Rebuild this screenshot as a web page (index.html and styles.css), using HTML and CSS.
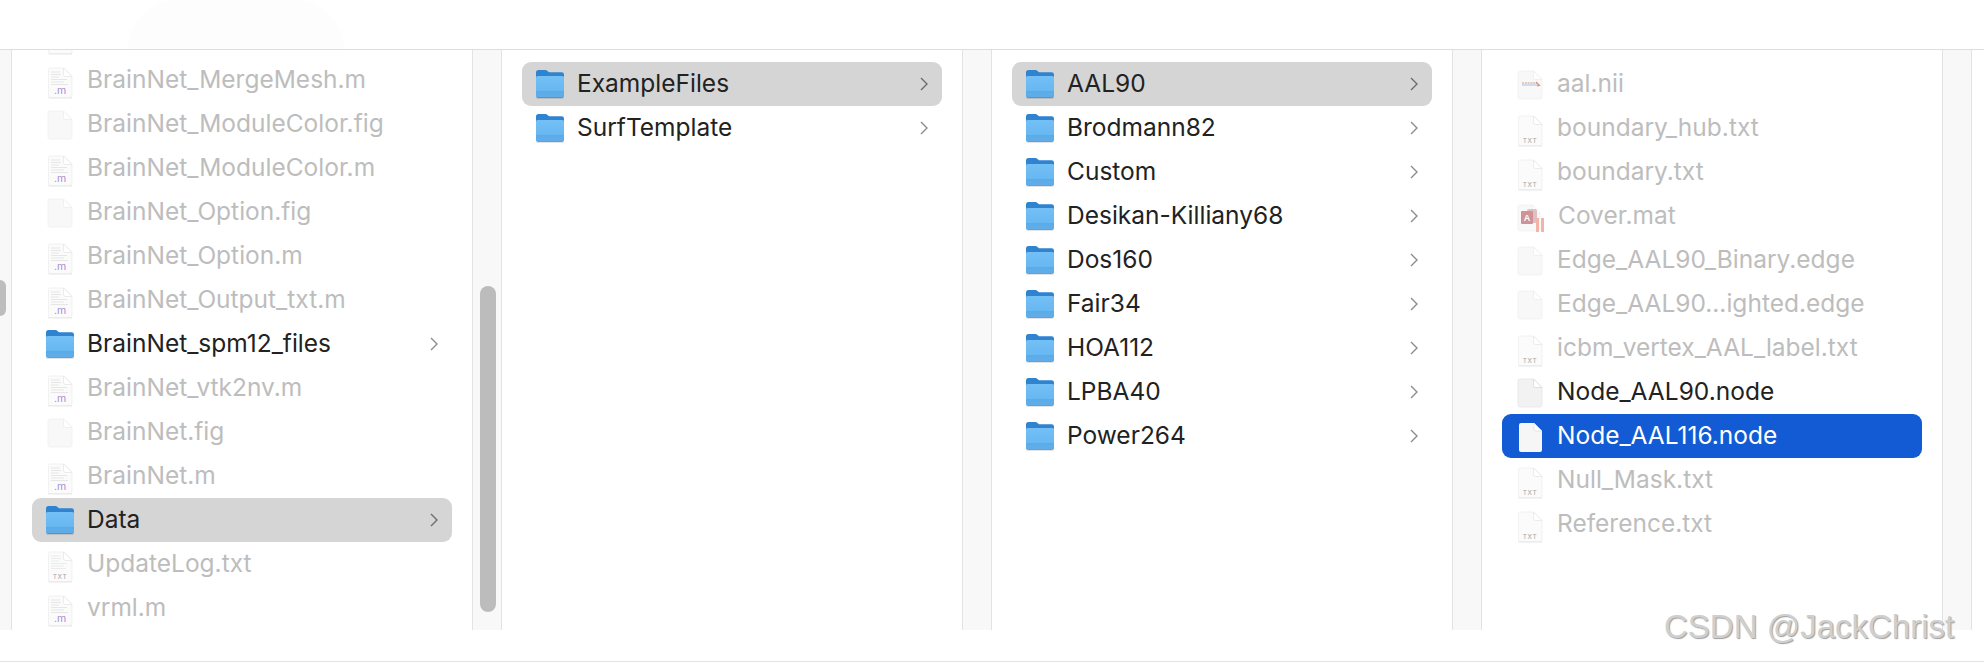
FILE: index.html
```html
<!DOCTYPE html>
<html lang="en">
<head>
<meta charset="utf-8">
<title>Finder columns</title>
<link rel="stylesheet" href="styles.css">
</head>
<body>
<svg class="defs" width="0" height="0" aria-hidden="true">
  <defs>
    <linearGradient id="fb" x1="0" y1="0" x2="0" y2="1"><stop offset="0" stop-color="#74c0f6"/><stop offset="1" stop-color="#62b3ef"/></linearGradient>
    <symbol id="folder" viewBox="0 0 28 30">
      <path d="M0 3.5Q0 1 2.5 1H9.5Q10.500 1 11.500 2L13 3.200H25.500Q28 3.200 28 5.500V26Q28 28.200 25.800 28.200H2.200Q0 28.200 0 26Z" fill="#2f83cf"/>
      <rect x="0" y="7" width="28" height="21.200" rx="1.500" fill="url(#fb)"/>
      <rect x="0" y="22.500" width="28" height="1" fill="#4f9edb"/>
      <rect x="0" y="23.500" width="28" height="4.700" rx="1.500" fill="#5eadea"/>
      <rect x="0.500" y="28.200" width="27" height="1.200" fill="#000" opacity=".28"/>
    </symbol>
    <symbol id="chev" viewBox="0 0 8 14">
      <path d="M1 1L7 7L1 13" fill="none" stroke="currentColor" stroke-width="1.400"/>
    </symbol>
    <symbol id="blank" viewBox="0 0 26 30">
      <path d="M1 3Q1 1 3 1H16.500L25 9.500V27Q25 29 23 29H3Q1 29 1 27Z" fill="#f8f8f8" stroke="#f0f0f0" stroke-width=".8"/>
      <path d="M16.500 1V7.500Q16.500 9.500 18.500 9.500H25Z" fill="#fff" stroke="#ececec" stroke-width=".8"/>
    </symbol>
    <symbol id="blank-on" viewBox="0 0 26 30">
      <path d="M1 3Q1 1 3 1H16.500L25 9.500V27Q25 29 23 29H3Q1 29 1 27Z" fill="#f2f2f2" stroke="#e6e6e6" stroke-width=".8"/>
      <path d="M16.500 1V7.500Q16.500 9.500 18.500 9.500H25Z" fill="#fff" stroke="#d8d8d8" stroke-width=".8"/>
    </symbol>
    <symbol id="blank-sel" viewBox="0 0 26 30">
      <path d="M2 3Q2 1 4 1H17L25 9V28Q25 30 23 30H4Q2 30 2 28Z" fill="#f6f6f6"/>
      <path d="M17 1V7Q17 9 19 9H25Z" fill="#fff" stroke="#cfd8e8" stroke-width=".6"/>
    </symbol>
    <symbol id="doc" viewBox="0 0 26 32">
      <path d="M1.500 2.500Q1.500 1 3 1H16.500L25 9.500V29Q25 30.500 23.500 30.500H3Q1.500 30.500 1.500 29Z" fill="#fbfbfb"/>
      <path d="M1.500 30.500H25V31.300H1.500Z" fill="#d6d6d6"/>
      <path d="M1.500 2.500Q1.500 1 3 1H16.500L25 9.500V29Q25 30.500 23.500 30.500H3Q1.500 30.500 1.500 29Z" fill="none" stroke="#ececec" stroke-width=".7"/>
      <path d="M16.500 1V7.500Q16.500 9.500 18.500 9.500H25Z" fill="#fff" stroke="#e4e4e4" stroke-width=".7"/>
    </symbol>
    <symbol id="doc-m" viewBox="0 0 26 32">
      <use href="#doc"/>
      <path d="M4 5H13M4 7.500H14M4 10H12M4 12.500H20M4 15H17M4 17.500H21" stroke="#e6e6e6" stroke-width="1.200"/>
      <text class="glyph-m" x="13" y="27" text-anchor="middle">.m</text>
    </symbol>
    <symbol id="doc-txt" viewBox="0 0 26 32">
      <use href="#doc"/>
      <text class="glyph-txt" x="13" y="27.500" text-anchor="middle">TXT</text>
    </symbol>
    <symbol id="doc-lines" viewBox="0 0 26 32">
      <use href="#doc"/>
      <path d="M4 5H13M4 7.500H14M4 10H12M4 12.500H20M4 15H17M4 17.500H19" stroke="#ececec" stroke-width="1.200"/>
      <text class="glyph-txt" x="13" y="27.500" text-anchor="middle">TXT</text>
    </symbol>
    <symbol id="doc-nii" viewBox="0 0 26 30">
      <use href="#blank"/>
      <path d="M5 13H20" stroke="#dcb6b0" stroke-width="1.500" stroke-dasharray="2 .8"/>
      <path d="M5 15H21" stroke="#cfdcec" stroke-width="2"/>
      <path d="M19 12L22.500 15.500L20 16" fill="none" stroke="#d98f84" stroke-width="1.200"/>
    </symbol>
    <symbol id="doc-mat" viewBox="0 0 28 30">
      <use href="#blank" width="24" height="30"/>
      <rect x="10" y="6" width="10" height="14" rx="2" fill="#dcc0c3"/>
      <rect x="4" y="8" width="12" height="13" rx="1" fill="#cf9297"/>
      <text class="glyph-a" x="10" y="18" text-anchor="middle">A</text>
      <rect x="19" y="15" width="3" height="14" fill="#f3b3a9"/>
      <rect x="24" y="15" width="3" height="14" fill="#f3b3a9"/>
    </symbol>
  </defs>
</svg>

<header class="toolbar"><div class="ghost"></div></header>

<main class="browser">
  <div class="rail-thumb"></div>

  <section class="col">
    <div class="list list-scrolled">
      <div class="row"><svg class="ic ic-doc"><use href="#doc-m"/></svg></div>
      <div class="row dim"><svg class="ic ic-doc"><use href="#doc-m"/></svg><span class="name">BrainNet_MergeMesh.m</span></div>
      <div class="row dim"><svg class="ic ic-blank"><use href="#blank"/></svg><span class="name">BrainNet_ModuleColor.fig</span></div>
      <div class="row dim"><svg class="ic ic-doc"><use href="#doc-m"/></svg><span class="name">BrainNet_ModuleColor.m</span></div>
      <div class="row dim"><svg class="ic ic-blank"><use href="#blank"/></svg><span class="name">BrainNet_Option.fig</span></div>
      <div class="row dim"><svg class="ic ic-doc"><use href="#doc-m"/></svg><span class="name">BrainNet_Option.m</span></div>
      <div class="row dim"><svg class="ic ic-doc"><use href="#doc-m"/></svg><span class="name">BrainNet_Output_txt.m</span></div>
      <div class="row"><svg class="ic ic-folder"><use href="#folder"/></svg><span class="name">BrainNet_spm12_files</span><svg class="chev"><use href="#chev"/></svg></div>
      <div class="row dim"><svg class="ic ic-doc"><use href="#doc-m"/></svg><span class="name">BrainNet_vtk2nv.m</span></div>
      <div class="row dim"><svg class="ic ic-blank"><use href="#blank"/></svg><span class="name">BrainNet.fig</span></div>
      <div class="row dim"><svg class="ic ic-doc"><use href="#doc-m"/></svg><span class="name">BrainNet.m</span></div>
      <div class="row open"><svg class="ic ic-folder"><use href="#folder"/></svg><span class="name">Data</span><svg class="chev"><use href="#chev"/></svg></div>
      <div class="row dim"><svg class="ic ic-doc"><use href="#doc-lines"/></svg><span class="name">UpdateLog.txt</span></div>
      <div class="row dim"><svg class="ic ic-doc"><use href="#doc-m"/></svg><span class="name">vrml.m</span></div>
    </div>
    <div class="thumb"></div>
  </section>

  <section class="col">
    <div class="list">
      <div class="row open"><svg class="ic ic-folder"><use href="#folder"/></svg><span class="name">ExampleFiles</span><svg class="chev"><use href="#chev"/></svg></div>
      <div class="row"><svg class="ic ic-folder"><use href="#folder"/></svg><span class="name">SurfTemplate</span><svg class="chev"><use href="#chev"/></svg></div>
    </div>
  </section>

  <section class="col">
    <div class="list">
      <div class="row open"><svg class="ic ic-folder"><use href="#folder"/></svg><span class="name">AAL90</span><svg class="chev"><use href="#chev"/></svg></div>
      <div class="row"><svg class="ic ic-folder"><use href="#folder"/></svg><span class="name">Brodmann82</span><svg class="chev"><use href="#chev"/></svg></div>
      <div class="row"><svg class="ic ic-folder"><use href="#folder"/></svg><span class="name">Custom</span><svg class="chev"><use href="#chev"/></svg></div>
      <div class="row"><svg class="ic ic-folder"><use href="#folder"/></svg><span class="name">Desikan-Killiany68</span><svg class="chev"><use href="#chev"/></svg></div>
      <div class="row"><svg class="ic ic-folder"><use href="#folder"/></svg><span class="name">Dos160</span><svg class="chev"><use href="#chev"/></svg></div>
      <div class="row"><svg class="ic ic-folder"><use href="#folder"/></svg><span class="name">Fair34</span><svg class="chev"><use href="#chev"/></svg></div>
      <div class="row"><svg class="ic ic-folder"><use href="#folder"/></svg><span class="name">HOA112</span><svg class="chev"><use href="#chev"/></svg></div>
      <div class="row"><svg class="ic ic-folder"><use href="#folder"/></svg><span class="name">LPBA40</span><svg class="chev"><use href="#chev"/></svg></div>
      <div class="row"><svg class="ic ic-folder"><use href="#folder"/></svg><span class="name">Power264</span><svg class="chev"><use href="#chev"/></svg></div>
    </div>
  </section>

  <section class="col">
    <div class="list">
      <div class="row dim"><svg class="ic ic-blank"><use href="#doc-nii"/></svg><span class="name">aal.nii</span></div>
      <div class="row dim"><svg class="ic ic-doc"><use href="#doc-txt"/></svg><span class="name">boundary_hub.txt</span></div>
      <div class="row dim"><svg class="ic ic-doc"><use href="#doc-txt"/></svg><span class="name">boundary.txt</span></div>
      <div class="row dim"><svg class="ic ic-mat"><use href="#doc-mat"/></svg><span class="name">Cover.mat</span></div>
      <div class="row dim"><svg class="ic ic-blank"><use href="#blank"/></svg><span class="name">Edge_AAL90_Binary.edge</span></div>
      <div class="row dim"><svg class="ic ic-blank"><use href="#blank"/></svg><span class="name">Edge_AAL90...ighted.edge</span></div>
      <div class="row dim"><svg class="ic ic-doc"><use href="#doc-txt"/></svg><span class="name">icbm_vertex_AAL_label.txt</span></div>
      <div class="row"><svg class="ic ic-blank"><use href="#blank-on"/></svg><span class="name">Node_AAL90.node</span></div>
      <div class="row selected"><svg class="ic ic-blank"><use href="#blank-sel"/></svg><span class="name">Node_AAL116.node</span></div>
      <div class="row dim"><svg class="ic ic-doc"><use href="#doc-txt"/></svg><span class="name">Null_Mask.txt</span></div>
      <div class="row dim"><svg class="ic ic-doc"><use href="#doc-txt"/></svg><span class="name">Reference.txt</span></div>
    </div>
  </section>

  <div class="tail"></div>
</main>

<footer class="statusbar"><div class="rule"></div></footer>
<div class="watermark">CSDN @JackChrist</div>
</body>
</html>
```

FILE: styles.css
```css
* { box-sizing: border-box; }

html, body {
  margin: 0;
  width: 1984px;
  height: 662px;
  overflow: hidden;
  background: #fff;
  font-family: Inter, "Liberation Sans", sans-serif;
}

body {
  display: flex;
  flex-direction: column;
  position: relative;
}

.defs { position: absolute; }

.toolbar {
  position: relative;
  z-index: 2;
  flex: 0 0 50px;
  background: #fff;
  border-bottom: 1px solid #dedede;
  overflow: hidden;
}

.ghost {
  position: absolute;
  left: 128px;
  top: 0;
  width: 216px;
  height: 60px;
  background: #fdfdfd;
  border-radius: 50px 50px 0 0;
}

.browser {
  position: relative;
  flex: 0 0 568px;
  display: flex;
  gap: 28px;
  padding-left: 11px;
  background: #f8f8f8;
}

.rail-thumb {
  position: absolute;
  left: 0;
  top: 230px;
  width: 6px;
  height: 36px;
  background: #bdbdbd;
  border-radius: 0 6px 6px 0;
}

.col {
  position: relative;
  flex: 0 0 462px;
  background: #fff;
  border-left: 1px solid #e3e3e3;
  border-right: 1px solid #e3e3e3;
}

.list {
  padding: 12px 20px 0;
}

.list-scrolled {
  margin-top: -48px;
}

.thumb {
  position: absolute;
  right: -24px;
  top: 236px;
  width: 16px;
  height: 326px;
  background: #bcbcbc;
  border-radius: 8px;
}

.tail {
  flex: 1;
  margin-left: 0;
  background: #fff;
  border-left: 1px solid #e3e3e3;
}

.row {
  display: flex;
  align-items: center;
  height: 44px;
  padding: 0 14px;
  border-radius: 9px;
  color: #222;
  font-size: 24.500px;
  line-height: 44px;
  white-space: nowrap;
}

.row.open { background: #d5d5d5; }
.row.selected { background: #125bd4; color: #fff; }
.row.dim { color: #bdbdbd; }

.name {
  flex: 1;
  position: relative;
  top: -1px;
}

.ic {
  flex: 0 0 auto;
  margin-right: 13px;
  overflow: visible;
}

.ic-folder { width: 28px; height: 30px; }
.ic-doc { width: 26px; height: 32px; margin-left: 1px; margin-right: 14px; position: relative; top: 3px; }
.ic-blank { width: 26px; height: 30px; margin-left: 1px; margin-right: 14px; position: relative; top: 1px; }
.ic-mat { width: 28px; height: 30px; margin-left: 1px; margin-right: 13px; position: relative; top: 2px; }

.chev {
  flex: 0 0 auto;
  width: 8px;
  height: 14px;
  color: #8c8c8c;
}

.row.open .chev { color: #6c6c6c; }

.glyph-m {
  font: 400 10.500px Inter, "Liberation Sans", sans-serif;
  fill: #a98ed0;
}

.glyph-txt {
  font: 400 6.500px Inter, "Liberation Sans", sans-serif;
  letter-spacing: .6px;
  fill: #a4a4a4;
}

.glyph-a {
  font: 700 9px "Liberation Sans", sans-serif;
  fill: #fff;
}

.statusbar {
  flex: 0 0 44px;
  position: relative;
  z-index: 2;
  background: #fff;
  padding-top: 31px;
}

.rule {
  height: 2px;
  background: #e3e3e3;
}

.watermark {
  position: absolute;
  z-index: 3;
  left: 1664px;
  top: 608px;
  font: 400 33px "Liberation Sans", sans-serif;
  color: #cfcfcf;
  text-shadow: 1px 1px 1px #9e9e9e;
  white-space: nowrap;
}
```
